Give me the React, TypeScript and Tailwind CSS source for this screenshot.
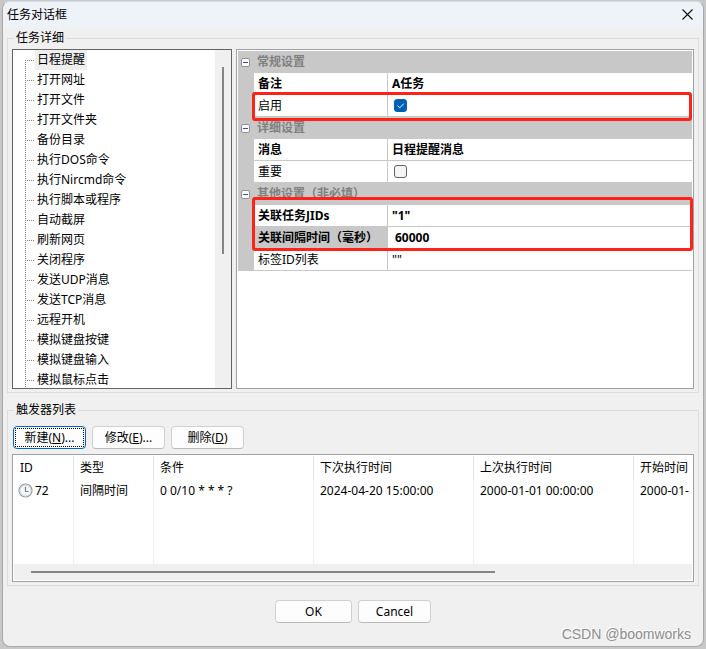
import { useState } from 'react';
import type { ReactNode } from 'react';

const TASK_TYPES = [
    '日程提醒', '打开网址', '打开文件', '打开文件夹', '备份目录', '执行DOS命令',
    '执行Nircmd命令', '执行脚本或程序', '自动截屏', '刷新网页', '关闭程序', '发送UDP消息',
    '发送TCP消息', '远程开机', '模拟键盘按键', '模拟键盘输入', '模拟鼠标点击',
];

const COLUMNS = [
    { title: 'ID', width: 'w-[60px]' },
    { title: '类型', width: 'w-[80px]' },
    { title: '条件', width: 'w-[160px]' },
    { title: '下次执行时间', width: 'w-[160px]' },
    { title: '上次执行时间', width: 'w-[160px]' },
    { title: '开始时间', width: 'w-[160px]' },
];

const TRIGGERS = [
    ['72', '间隔时间', '0 0/10 * * * ?', '2024-04-20 15:00:00', '2000-01-01 00:00:00', '2000-01-'],
];

function ClockIcon() {
    return (
        <svg width="15" height="15" viewBox="0 0 15 15" className="shrink-0" aria-hidden="true">
            <circle cx="7.5" cy="7.5" r="6.5" fill="#f4f6f8" stroke="#929498" strokeWidth="1.1" />
            <circle cx="7.5" cy="7.5" r="5.4" fill="none" stroke="#cfdbe8" strokeWidth="1" />
            <path d="M7.5 3.8V8.5H10.5" fill="none" stroke="#7a8088" strokeWidth="1.2" />
        </svg>
    );
}

function TreePanel() {
    const [selected, setSelected] = useState(0);

    return (
        <div className="flex h-[340px] w-[220px] shrink-0 overflow-hidden border border-[#646464] bg-white">
            <ul className="min-w-0 flex-1">
                {TASK_TYPES.map((name, i) => (
                    <li key={name} className="flex h-5 items-center pl-3">
                        <svg width="10" height="20" className="shrink-0" aria-hidden="true">
                            <path d={i === 0 ? 'M.5 10V20' : 'M.5 0V20'} stroke="#808080" strokeDasharray="1 1" />
                            <path d="M0 10.5H10" stroke="#808080" strokeDasharray="1 1" />
                        </svg>
                        <button
                            onClick={() => setSelected(i)}
                            className={`h-5 px-[2px] leading-5 ${selected === i ? 'bg-[#efefef]' : ''}`}
                        >
                            {name}
                        </button>
                    </li>
                ))}
            </ul>
            {/* Scrollbar */}
            <div className="flex w-4 justify-center bg-[#f0f0f0] pt-[17px]">
                <div className="h-[187px] w-[2px] bg-[#858585]"></div>
            </div>
        </div>
    );
}

function CategoryRow({ title }: { title: string }) {
    return (
        <tr className="h-[22px] bg-[#c8c8c8] text-[#808080]">
            <td className="w-4">
                <button
                    aria-label={title}
                    className="ml-[3px] flex size-[9px] items-center justify-center rounded-[2px] border border-[#919191] bg-white"
                >
                    <span className="h-px w-[5px] bg-[#3c50a0]"></span>
                </button>
            </td>
            <th colSpan={2} className="pl-[3px] text-left font-bold">{title}</th>
        </tr>
    );
}

interface PropertyRowProps {
    label: string;
    htmlFor?: string;
    bold?: boolean;
    active?: boolean;
    children: ReactNode;
}

function PropertyRow({ label, htmlFor, bold, active, children }: PropertyRowProps) {
    return (
        <tr className={`h-[22px] ${bold ? 'font-bold' : ''}`}>
            <td className="bg-[#c8c8c8]"></td>
            <td className={`border-r border-b border-[#c8c8c8] pl-1 ${active ? 'bg-[#c8c8c8]' : ''}`}>
                <label htmlFor={htmlFor}>{label}</label>
            </td>
            <td className="border-b border-[#c8c8c8] pl-1">{children}</td>
        </tr>
    );
}

function CheckBox({ id, initial }: { id: string; initial: boolean }) {
    const [checked, setChecked] = useState(initial);

    return (
        <span className="ml-[2px] grid size-[13px]">
            <input
                id={id}
                type="checkbox"
                checked={checked}
                onChange={() => setChecked(!checked)}
                className="col-start-1 row-start-1 size-[13px] appearance-none rounded-[3px] border border-[#626262] bg-[#f5f5f5] checked:border-[#005fb8] checked:bg-[#005fb8]"
            />
            {checked && (
                <svg viewBox="0 0 13 13" className="pointer-events-none col-start-1 row-start-1 size-[13px]" aria-hidden="true">
                    <path d="M3.5 6.7L5.7 8.8L9.8 4.7" fill="none" stroke="#fff" strokeWidth="1" />
                </svg>
            )}
        </span>
    );
}

function PropertyPanel() {
    const [interval, setInterval] = useState('60000');

    return (
        <div className="relative min-w-0 flex-1 border border-[#a0a0a8] bg-white p-px">
            <table className="w-full table-fixed border-separate border-spacing-0">
                <colgroup>
                    <col className="w-4" />
                    <col className="w-[134px]" />
                    <col />
                </colgroup>
                <tbody>
                    <CategoryRow title="常规设置" />
                    <PropertyRow label="备注" bold>A任务</PropertyRow>
                    <PropertyRow label="启用" htmlFor="enabled"><CheckBox id="enabled" initial={true} /></PropertyRow>
                    <CategoryRow title="详细设置" />
                    <PropertyRow label="消息" bold>日程提醒消息</PropertyRow>
                    <PropertyRow label="重要" htmlFor="important"><CheckBox id="important" initial={false} /></PropertyRow>
                    <CategoryRow title="其他设置（非必填）" />
                    <PropertyRow label="关联任务JIDs" bold>"1"</PropertyRow>
                    <PropertyRow label="关联间隔时间（毫秒）" htmlFor="interval" bold active>
                        <input
                            id="interval"
                            type="text"
                            value={interval}
                            onChange={(e) => setInterval(e.target.value)}
                            className="block h-4 w-full bg-white pl-[3px] outline-none"
                        />
                    </PropertyRow>
                    <PropertyRow label="标签ID列表">""</PropertyRow>
                </tbody>
            </table>

            {/* Highlight frames over the grid */}
            <div className="pointer-events-none absolute top-[42px] right-px left-[15px] h-[29px] rounded-[3px] border-3 border-[#ff2216]"></div>
            <div className="pointer-events-none absolute top-[147px] right-0 left-[15px] h-[54px] rounded-[3px] border-3 border-[#ff2216]"></div>
        </div>
    );
}

function TriggerTable() {
    return (
        <div className="mt-[5px] overflow-hidden border border-[#a0a0a8] bg-white p-px">
            <div className="overflow-hidden">
                <table className="w-[780px] table-fixed border-separate border-spacing-0">
                    <thead>
                        <tr className="h-6">
                            {COLUMNS.map((c) => (
                                <th key={c.title} className={`border-r border-[#e2e2e2] pl-[6px] text-left font-normal ${c.width}`}>
                                    {c.title}
                                </th>
                            ))}
                        </tr>
                    </thead>
                    <tbody>
                        {TRIGGERS.map((row) => (
                            <tr key={row[0]} className="h-[21px]">
                                {row.map((cell, i) => (
                                    <td key={i} className="border-r border-[#e8f1f9] pl-[6px] whitespace-nowrap">
                                        {i === 0 ? (
                                            <span className="-ml-[2px] flex items-center gap-[2px]"><ClockIcon />{cell}</span>
                                        ) : cell}
                                    </td>
                                ))}
                            </tr>
                        ))}
                        {/* Empty area below the rows */}
                        <tr className="h-[63px]">
                            {COLUMNS.map((c) => <td key={c.title} className="border-r border-[#e8f1f9]"></td>)}
                        </tr>
                    </tbody>
                </table>
            </div>
            {/* Scrollbar */}
            <div className="flex h-4 items-center bg-[#f0f0f0] px-[17px]">
                <div className="h-[2px] w-[72%] bg-[#858585]"></div>
            </div>
        </div>
    );
}

function PushButton({ children, focused, wide }: { children: ReactNode; focused?: boolean; wide?: boolean }) {
    return (
        <button
            className={`flex h-[23px] rounded-[4px] border bg-[#fdfdfd] p-px ${wide ? 'w-[77px]' : 'w-[73px]'} ${
                focused ? 'border-[#0067c0]' : 'border-[#d0d0d0] border-b-[#bababa]'
            }`}
        >
            <span className={`flex h-full w-full items-center justify-center border border-dotted ${focused ? 'border-black' : 'border-transparent'}`}>
                <span>{children}</span>
            </span>
        </button>
    );
}

function Group({ title, children }: { title: string; children: ReactNode }) {
    return (
        <fieldset className="mx-1 min-w-0 border border-[#dcdcdc] px-1 pb-[3px]">
            <legend className="ml-[2px] px-[2px] leading-4">{title}</legend>
            {children}
        </fieldset>
    );
}

export default function App() {
    return (
        <div className="flex min-h-screen bg-[#c8c8c8] px-[2px] pt-px pb-[2px] font-['Noto_Sans','Noto_Sans_CJK_SC',sans-serif] text-[12px] leading-4 text-black">
            <main className="flex min-w-0 flex-1 flex-col overflow-hidden rounded-lg border border-[#a8a8a8] border-t-[#d8dce0] bg-[#f0f0f0]">
                <header className="flex h-[25px] items-center justify-between bg-[#eef3fa] pr-[10px] pl-1">
                    <h1>任务对话框</h1>
                    <button aria-label="关闭">
                        <svg width="11" height="11" viewBox="0 0 11 11" aria-hidden="true">
                            <path d="M.5 .5L10.5 10.5M10.5 .5L.5 10.5" stroke="#111" strokeWidth="1.1" />
                        </svg>
                    </button>
                </header>

                <div className="flex flex-col gap-[9px] pt-[3px]">
                    <Group title="任务详细">
                        <div className="flex gap-1 pt-[3px]">
                            <TreePanel />
                            <PropertyPanel />
                        </div>
                    </Group>

                    <Group title="触发器列表">
                        <div className="flex gap-[6px] pt-2 pl-px">
                            <PushButton focused>新建(<u>N</u>)...</PushButton>
                            <PushButton>修改(<u>E</u>)...</PushButton>
                            <PushButton>删除(<u>D</u>)</PushButton>
                        </div>
                        <TriggerTable />
                    </Group>
                </div>

                <div className="mt-[14px] flex justify-center gap-[6px]">
                    <PushButton wide>OK</PushButton>
                    <PushButton>Cancel</PushButton>
                </div>
                <p className="mt-auto pr-3 pb-1 text-right font-['Liberation_Sans',sans-serif] text-[14px] text-[#8e8e8e] text-shadow-[-1px_-1px_0_#ffffff]">
                    CSDN @boomworks
                </p>
            </main>
        </div>
    );
}
